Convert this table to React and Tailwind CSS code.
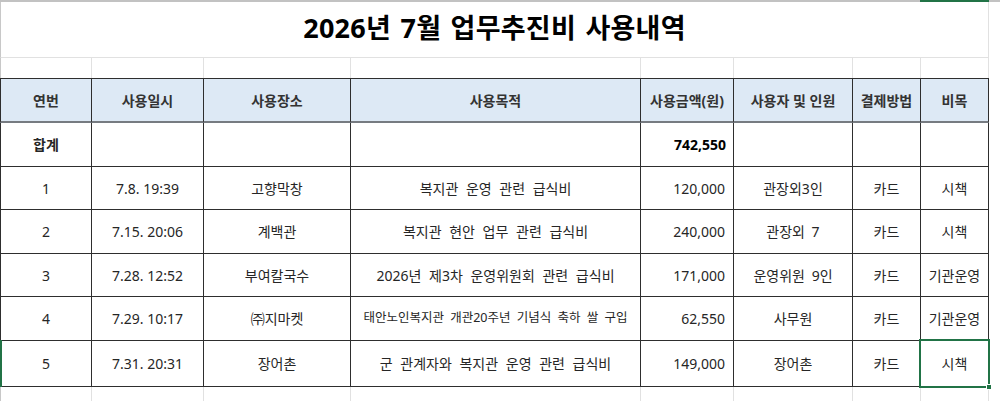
import React from "react";

const cols = "grid grid-cols-[92px_112px_147px_290px_93px_119px_68px_68px]";

const rows = [
  { no: "1", date: "7.8. 19:39", place: "고향막창", purpose: "복지관 운영 관련 급식비", amount: "120,000", user: "관장외3인", pay: "카드", note: "시책", h: "h-[43px]" },
  { no: "2", date: "7.15. 20:06", place: "계백관", purpose: "복지관 현안 업무 관련 급식비", amount: "240,000", user: "관장외 7", pay: "카드", note: "시책", h: "h-[44px]" },
  { no: "3", date: "7.28. 12:52", place: "부여칼국수", purpose: "2026년 제3차 운영위원회 관련 급식비", amount: "171,000", user: "운영위원 9인", pay: "카드", note: "기관운영", h: "h-[43px]" },
  { no: "4", date: "7.29. 10:17", place: "㈜지마켓", purpose: "태안노인복지관 개관20주년 기념식 축하 쌀 구입", amount: "62,550", user: "사무원", pay: "카드", note: "기관운영", h: "h-[44px]", small: true },
  { no: "5", date: "7.31. 20:31", place: "장어촌", purpose: "군 관계자와 복지관 운영 관련 급식비", amount: "149,000", user: "장어촌", pay: "카드", note: "시책", h: "h-[46px]" },
];

const headers = ["연번", "사용일시", "사용장소", "사용목적", "사용금액(원)", "사용자 및 인원", "결제방법", "비목"];

function GridRow({ h }) {
  return (
    <div className={`${cols} ${h}`}>
      {headers.map((_, i) => (
        <div
          key={i}
          className={`border-r border-[#e1e1e1] ${i === 0 ? "border-l border-l-[#c8c8c8]" : ""}`}
        />
      ))}
    </div>
  );
}

function Cell({ children, first, className = "" }) {
  return (
    <div
      className={`flex items-center border-r border-b border-[#2e2e2e] ${first ? "border-l" : ""} ${className}`}
    >
      {children}
    </div>
  );
}

export default function App() {
  return (
    <div className="relative w-[1000px] h-[401px] overflow-hidden bg-white text-[#262626] font-['Noto_Sans','Noto_Sans_CJK_KR',sans-serif]">
      {/* top edge of the sheet */}
      <div className="h-[2px] w-full bg-[#c2c2c2]" />

      {/* title row (merged) */}
      <div className="flex">
        <div className="w-[989px] h-[56px] flex items-center justify-center border-l border-l-[#c8c8c8] border-r border-b border-[#e1e1e1]">
          <h1 className="text-[27px] font-bold tracking-[0.01em] text-black [word-spacing:2px] -mt-[2px]">
            2026년 7월 업무추진비 사용내역
          </h1>
        </div>
      </div>

      <GridRow h="h-[20px]" />

      {/* header */}
      <div className={`${cols} h-[45px]`}>
        {headers.map((t, i) => (
          <div
            key={t}
            className={`flex items-center justify-center bg-[#dde9f5] border-t border-t-[#2e2e2e] border-b-2 border-b-[#767b81] border-r border-r-[#2e2e2e] ${i === 0 ? "border-l border-l-[#2e2e2e]" : ""} text-[14px] font-bold text-[#333]`}
          >
            {t}
          </div>
        ))}
      </div>

      {/* total */}
      <div className={`${cols} h-[44px] text-[14px]`}>
        <Cell first className="justify-center font-bold">합계</Cell>
        <Cell />
        <Cell />
        <Cell />
        <Cell className="justify-end pr-[7px] font-bold text-black">742,550</Cell>
        <Cell />
        <Cell />
        <Cell />
      </div>

      {rows.map((r) => (
        <div key={r.no} className={`${cols} ${r.h} text-[14px]`}>
          <Cell first className="justify-center">{r.no}</Cell>
          <Cell className="justify-center">{r.date}</Cell>
          <Cell className="justify-center">{r.place}</Cell>
          <Cell
            className={`justify-center ${r.small ? "text-[12.5px] [word-spacing:3px]" : "[word-spacing:4px]"}`}
          >
            {r.purpose}
          </Cell>
          <Cell className="justify-end pr-[8px]">{r.amount}</Cell>
          <Cell className="justify-center [word-spacing:3px]">{r.user}</Cell>
          <Cell className="justify-center">{r.pay}</Cell>
          <Cell className="justify-center">{r.note}</Cell>
        </div>
      ))}

      <GridRow h="h-[14px]" />

      {/* selection overlays */}
      <div className="absolute left-[920px] top-0 w-[69px] h-[2px] bg-[#217346]" />
      <div className="absolute left-0 top-[340px] w-[2px] h-[47px] bg-[#217346]" />
      <div className="absolute left-[919px] top-[339px] w-[71px] h-[49px] border-2 border-[#217346]" />
      <div className="absolute left-[986px] top-[384px] w-[6px] h-[6px] bg-[#217346] border border-white" />
    </div>
  );
}
